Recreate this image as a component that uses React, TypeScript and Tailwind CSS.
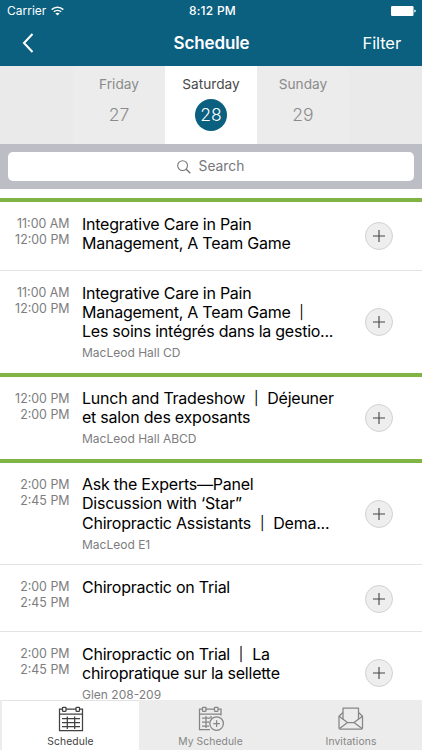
import React from "react";

type Session = {
  start: string;
  end: string;
  lines: string[];
  room?: string;
  size: string;
  body: string;
  button: string;
};

const sessions: Session[] = [
  {
    start: "11:00 AM",
    end: "12:00 PM",
    lines: ["Integrative Care in Pain", "Management, A Team Game"],
    size: "h-[73px] border-t-4 border-[#80b546]",
    body: "pt-[12.5px]",
    button: "mt-[20px]",
  },
  {
    start: "11:00 AM",
    end: "12:00 PM",
    lines: ["Integrative Care in Pain", "Management, A Team Game  |", "Les soins intégrés dans la gestio..."],
    room: "MacLeod Hall CD",
    size: "h-[102px]",
    body: "pt-[12.5px]",
    button: "mt-[37px]",
  },
  {
    start: "12:00 PM",
    end: "2:00 PM",
    lines: ["Lunch and Tradeshow  |  Déjeuner", "et salon des exposants"],
    room: "MacLeod Hall ABCD",
    size: "h-[86px] border-t-4 border-[#80b546]",
    body: "pt-[11.8px]",
    button: "mt-[27px]",
  },
  {
    start: "2:00 PM",
    end: "2:45 PM",
    lines: ["Ask the Experts—Panel", "Discussion with ‘Star”", "Chiropractic Assistants  |  Dema..."],
    room: "MacLeod E1",
    size: "h-[106px] border-t-4 border-[#80b546]",
    body: "pt-[12px]",
    button: "mt-[36.5px]",
  },
  {
    start: "2:00 PM",
    end: "2:45 PM",
    lines: ["Chiropractic on Trial"],
    size: "h-[67px]",
    body: "pt-[12.5px]",
    button: "mt-[20px]",
  },
  {
    start: "2:00 PM",
    end: "2:45 PM",
    lines: ["Chiropractic on Trial  |  La", "chiropratique sur la sellette"],
    room: "Glen 208-209",
    size: "h-[69px]",
    body: "pt-[12.8px]",
    button: "mt-[27px]",
  },
];

function CalendarIcon({ plus = false }: { plus?: boolean }) {
  return (
    <svg width="28" height="26" viewBox="0 0 28 26" fill="none" stroke="currentColor" strokeWidth="1.25">
      {plus ? (
        <>
          <path d="M13 23.5H2.5V3H5M8.5 3H17.5M21 3H24V9.5M2.5 8H24" />
          <path d="M5 12H13.5M5 16H12M5 20H12M9 10V22M14 10V12" />
          <circle cx="19.6" cy="17.6" r="6.8" />
          <path d="M16.3 17.6H22.9M19.6 14.3V20.9" />
        </>
      ) : (
        <>
          <path d="M5.5 3H2.5V24.5H25.5V3H22.5M9 3H19M2.5 8H25.5" />
          <path d="M5 12.7H23M5 16.7H23M5 20.7H23M10.3 10.5V23M17.7 10.5V23" />
        </>
      )}
      <rect x="5.5" y="1.3" width="3.5" height="4" rx="0.5" />
      <rect x={plus ? 17.5 : 19} y="1.3" width="3.5" height="4" rx="0.5" />
    </svg>
  );
}

function EnvelopeIcon() {
  return (
    <svg width="28" height="26" viewBox="0 0 28 26" fill="none" stroke="currentColor" strokeWidth="1.25" strokeLinejoin="round">
      <path d="M6 13.3V2H21.5V13.3" />
      <path d="M6 6.5L2 10.3V22Q2 23.2 3.2 23.2H24.3Q25.5 23.2 25.5 22V10.3L21.5 6.5" />
      <path d="M2 10.3L10.5 16.5H17L25.5 10.3M2.6 22.6L10.5 16.5M24.9 22.6L17 16.5" />
    </svg>
  );
}

function TitleLine({ text }: { text: string }) {
  const [before, after] = text.split("|");
  return (
    <span className="block whitespace-pre">
      {before}
      {after !== undefined && (
        <>
          <span className="mr-[0.6px] ml-[0.3px] inline-block align-[0.5px] text-[13.5px] leading-none">|</span>
          {after}
        </>
      )}
    </span>
  );
}

function SessionRow({ s, divider }: { s: Session; divider: boolean }) {
  return (
    <li className={`flex shrink-0 overflow-hidden ${s.size}`}>
      <div className={`flex w-full ${divider ? "border-b border-[#e3e3e5]" : ""}`}>
        <div className="w-[69.5px] shrink-0 pt-[14px] text-right text-[12.4px] leading-[16.4px] text-[#7d7d80]">
          <div>{s.start}</div>
          <div>{s.end}</div>
        </div>
        <div className={`ml-[12.5px] w-[283px] shrink-0 ${s.body}`}>
          <h2 className="text-[16px] leading-[19.4px] tracking-[-0.24px] text-black">
            {s.lines.map((l) => (
              <TitleLine key={l} text={l} />
            ))}
          </h2>
          {s.room && <p className="mt-[2.5px] text-[12px] leading-[17px] text-[#7d7d80]">{s.room}</p>}
        </div>
        <button aria-label="Add" className={`flex size-[28px] shrink-0 items-center justify-center rounded-full border border-[#d2d2d2] bg-[#eeeeee] ${s.button}`}>
          <svg width="12" height="12" viewBox="0 0 12 12" stroke="#444" strokeWidth="1.1">
            <path d="M0 6H12M6 0V12" />
          </svg>
        </button>
      </div>
    </li>
  );
}

export default function App() {
  return (
    <div className="flex h-[750px] w-[422px] flex-col overflow-hidden bg-white font-['Inter',sans-serif]">
      <header className="flex h-[66px] shrink-0 flex-col bg-[#0b5f7f] text-white">
        <div className="grid h-[22px] grid-cols-3 items-center pr-[6px] pl-[7px] text-[12px]">
          <span className="flex items-center gap-[5px]">
            Carrier
            <svg width="13" height="10" viewBox="0 0 13 10" fill="none" stroke="white" strokeWidth="1.5">
              <path d="M0.7 3.6C4 0.4 9 0.4 12.3 3.6M2.8 5.8C4.9 3.9 8.1 3.9 10.2 5.8" />
              <path d="M6.5 9.5L4.4 7.4C5.6 6.4 7.4 6.4 8.6 7.4Z" fill="white" stroke="none" />
            </svg>
          </span>
          <span className="pl-[2px] text-center font-medium tracking-[0.25px]">8:12 PM</span>
          <svg className="justify-self-end" width="25" height="10" viewBox="0 0 25 10" fill="white">
            <rect width="22.5" height="10" rx="1.2" />
            <path d="M23.3 3.4Q24.8 3.6 24.8 5T23.3 6.6Z" />
          </svg>
        </div>
        <div className="grid h-[42px] grid-cols-3 items-center pr-[21px] pl-[22px]">
          <svg width="12" height="20" viewBox="0 0 12 20" fill="none" stroke="white" strokeWidth="2">
            <path d="M10.5 1L2 10L10.5 19" />
          </svg>
          <h1 className="pt-[2px] text-center text-[17px] font-semibold tracking-[-0.1px]">Schedule</h1>
          <span className="pt-[1px] text-right text-[16.5px] tracking-[-0.1px]">Filter</span>
        </div>
      </header>

      <nav className="flex h-[78px] shrink-0 bg-[#eaeaea] pl-[73px] text-center text-[13.7px] text-[#8b8b8b]">
        <div className="w-[92px] bg-[#ececec] pt-[8px]">
          <div className="leading-[20px]">Friday</div>
          <div className="mt-[6px] text-[17.5px] leading-[30px] font-light">27</div>
        </div>
        <div className="w-[92px] bg-white pt-[8px] text-[#4a4a4a]">
          <div className="leading-[20px]">Saturday</div>
          <div className="mx-auto mt-[5px] size-[32px] rounded-full bg-[#0b5f7f] text-[17.5px] leading-[32px] font-light text-white">28</div>
        </div>
        <div className="w-[92px] bg-[#ececec] pt-[8px]">
          <div className="leading-[20px]">Sunday</div>
          <div className="mt-[6px] text-[17.5px] leading-[30px] font-light">29</div>
        </div>
      </nav>

      <div className="h-[45px] shrink-0 bg-[#bdbdc5] px-2 pt-2">
        <div className="flex h-[29px] items-center justify-center gap-[8px] rounded-[5px] bg-white pr-[1px] text-[13.8px] text-[#77777c]">
          <svg width="14" height="14" viewBox="0 0 14 14" fill="none" stroke="currentColor" strokeWidth="1.1">
            <circle cx="5.6" cy="5.6" r="4.9" />
            <path d="M9.2 9.2L13.3 13.3" strokeWidth="1.5" />
          </svg>
          Search
        </div>
      </div>

      <main className="min-h-0 flex-1 overflow-hidden pt-[9px]">
        <ul className="flex flex-col">
          {sessions.map((s, i) => (
            <SessionRow key={i} s={s} divider={i === 0 || i === 3 || i === 4} />
          ))}
        </ul>
      </main>

      <footer className="flex h-[50px] shrink-0 bg-[#ececec] pl-[2px] text-[10.3px] tracking-[0.1px] text-[#858585]">
        <div className="flex w-[137px] flex-col items-center border-t border-[#e3e3e5] bg-white pt-[5px] text-[#414141]">
          <CalendarIcon />
          <span className="mt-[1px] leading-[16px]">Schedule</span>
        </div>
        <div className="flex w-[143px] flex-col items-center pt-[6px]">
          <CalendarIcon plus />
          <span className="mt-[1px] leading-[16px]">My Schedule</span>
        </div>
        <div className="flex w-[138px] flex-col items-center pt-[6px]">
          <EnvelopeIcon />
          <span className="mt-[1px] leading-[16px]">Invitations</span>
        </div>
      </footer>
    </div>
  );
}
